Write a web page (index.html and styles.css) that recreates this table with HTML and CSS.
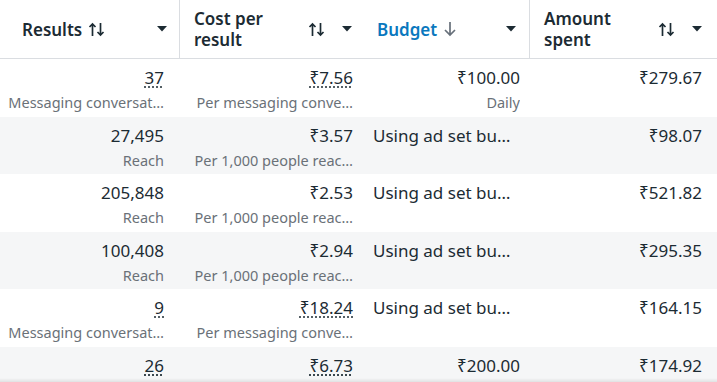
FILE: index.html
```html
<!DOCTYPE html>
<html lang="en">
<head>
    <meta charset="UTF-8">
    <meta name="viewport" content="width=device-width, initial-scale=1.0">
    <title>Ads report</title>
    <link rel="stylesheet" href="styles.css">
</head>
<body>
    <div class="table">
        <div class="row head">
            <div class="th results">
                <span class="label">Results</span>
                <svg class="sort" width="17" height="15" viewBox="0 0 17 15"><path d="M4.5 14V2M1.5 5l3-3 3 3M12.5 1v12M9.5 10l3 3 3-3"/></svg>
                <svg class="caret" width="10" height="6" viewBox="0 0 10 6"><path d="M0 0h10L5 5.5z"/></svg>
            </div>
            <div class="th cost">
                <span class="label grow">Cost per<br>result</span>
                <svg class="sort" width="17" height="15" viewBox="0 0 17 15"><path d="M4.5 14V2M1.5 5l3-3 3 3M12.5 1v12M9.5 10l3 3 3-3"/></svg>
                <svg class="caret" width="10" height="6" viewBox="0 0 10 6"><path d="M0 0h10L5 5.5z"/></svg>
            </div>
            <div class="th budget">
                <span class="label active">Budget</span>
                <svg class="sort down" width="14" height="16" viewBox="0 0 14 16"><path d="M7 1v13M2 9l5 5 5-5"/></svg>
                <svg class="caret" width="10" height="6" viewBox="0 0 10 6"><path d="M0 0h10L5 5.5z"/></svg>
            </div>
            <div class="th amount">
                <span class="label grow">Amount<br>spent</span>
                <svg class="sort" width="17" height="15" viewBox="0 0 17 15"><path d="M4.5 14V2M1.5 5l3-3 3 3M12.5 1v12M9.5 10l3 3 3-3"/></svg>
                <svg class="caret" width="10" height="6" viewBox="0 0 10 6"><path d="M0 0h10L5 5.5z"/></svg>
            </div>
        </div>

        <div class="row">
            <div class="td results"><div class="val"><span class="dotted">37</span></div><div class="sub">Messaging conversat…</div></div>
            <div class="td cost"><div class="val"><span class="dotted">₹7.56</span></div><div class="sub">Per messaging conve…</div></div>
            <div class="td budget"><div class="val">₹100.00</div><div class="sub">Daily</div></div>
            <div class="td amount"><div class="val">₹279.67</div></div>
        </div>
        <div class="row alt">
            <div class="td results"><div class="val">27,495</div><div class="sub">Reach</div></div>
            <div class="td cost"><div class="val">₹3.57</div><div class="sub">Per 1,000 people reac…</div></div>
            <div class="td budget left"><div class="val">Using ad set bu…</div></div>
            <div class="td amount"><div class="val">₹98.07</div></div>
        </div>
        <div class="row">
            <div class="td results"><div class="val">205,848</div><div class="sub">Reach</div></div>
            <div class="td cost"><div class="val">₹2.53</div><div class="sub">Per 1,000 people reac…</div></div>
            <div class="td budget left"><div class="val">Using ad set bu…</div></div>
            <div class="td amount"><div class="val">₹521.82</div></div>
        </div>
        <div class="row alt">
            <div class="td results"><div class="val">100,408</div><div class="sub">Reach</div></div>
            <div class="td cost"><div class="val">₹2.94</div><div class="sub">Per 1,000 people reac…</div></div>
            <div class="td budget left"><div class="val">Using ad set bu…</div></div>
            <div class="td amount"><div class="val">₹295.35</div></div>
        </div>
        <div class="row">
            <div class="td results"><div class="val"><span class="dotted">9</span></div><div class="sub">Messaging conversat…</div></div>
            <div class="td cost"><div class="val"><span class="dotted">₹18.24</span></div><div class="sub">Per messaging conve…</div></div>
            <div class="td budget left"><div class="val">Using ad set bu…</div></div>
            <div class="td amount"><div class="val">₹164.15</div></div>
        </div>
        <div class="row alt">
            <div class="td results"><div class="val"><span class="dotted">26</span></div></div>
            <div class="td cost"><div class="val"><span class="dotted">₹6.73</span></div></div>
            <div class="td budget"><div class="val">₹200.00</div></div>
            <div class="td amount"><div class="val">₹174.92</div></div>
        </div>
    </div>
    <div class="shade"></div>
</body>
</html>
```

FILE: styles.css
```css
body {
    margin: 0;
    font-family: "Noto Sans", "DejaVu Sans", sans-serif;
    color: #1c2b33;
    background-color: white;
    height: 382px;
    overflow: hidden;
}
.table {
    width: 717px;
}
.row {
    display: grid;
    grid-template-columns: 180px 183px 167px 187px;
    height: 57.5px;
    background-color: white;
}
.row.alt {
    background-color: #f5f6f7;
}
.row.head {
    height: 58px;
    border-bottom: 1px solid #dadde1;
}
.th {
    display: flex;
    align-items: center;
    padding: 0 12px 0 14px;
    font-size: 17px;
    font-weight: 600;
    line-height: 21px;
}
.th.results {
    padding-left: 22px;
    border-right: 1px solid #dadde1;
}
.th.cost {
    padding-right: 11px;
}
.th.budget {
    padding-right: 13px;
    border-right: 1px solid #dadde1;
}
.th.amount {
    padding-right: 15px;
}
.label.grow {
    flex: 1;
}
.label.active {
    color: #0a78be;
}
.sort {
    flex: none;
    margin-left: 6px;
    fill: none;
    stroke: #1c2b33;
    stroke-width: 1.7;
}
.sort.down {
    stroke: #67707a;
}
.caret {
    flex: none;
    margin-left: auto;
    fill: #1c2b33;
}
.th.cost .caret,
.th.amount .caret {
    margin-left: 17px;
}
.td {
    padding: 9px 10px 0 11px;
    text-align: right;
    min-width: 0;
}
.td.results {
    padding-left: 8px;
    padding-right: 16px;
}
.td.budget {
    padding-left: 10px;
}
.td.amount {
    padding-right: 15px;
}
.td.left {
    text-align: left;
}
.val {
    font-size: 17px;
    line-height: 20px;
    white-space: nowrap;
}
.sub {
    margin-top: 4px;
    font-size: 14.5px;
    line-height: 20px;
    color: #6a7178;
    white-space: nowrap;
    overflow: hidden;
}
.dotted {
    text-decoration: underline dotted;
    text-underline-offset: 3px;
}
.shade {
    position: fixed;
    left: 0;
    right: 0;
    bottom: 0;
    height: 4px;
    background: linear-gradient(rgba(0, 0, 0, 0), rgba(0, 0, 0, 0.08));
}
```
